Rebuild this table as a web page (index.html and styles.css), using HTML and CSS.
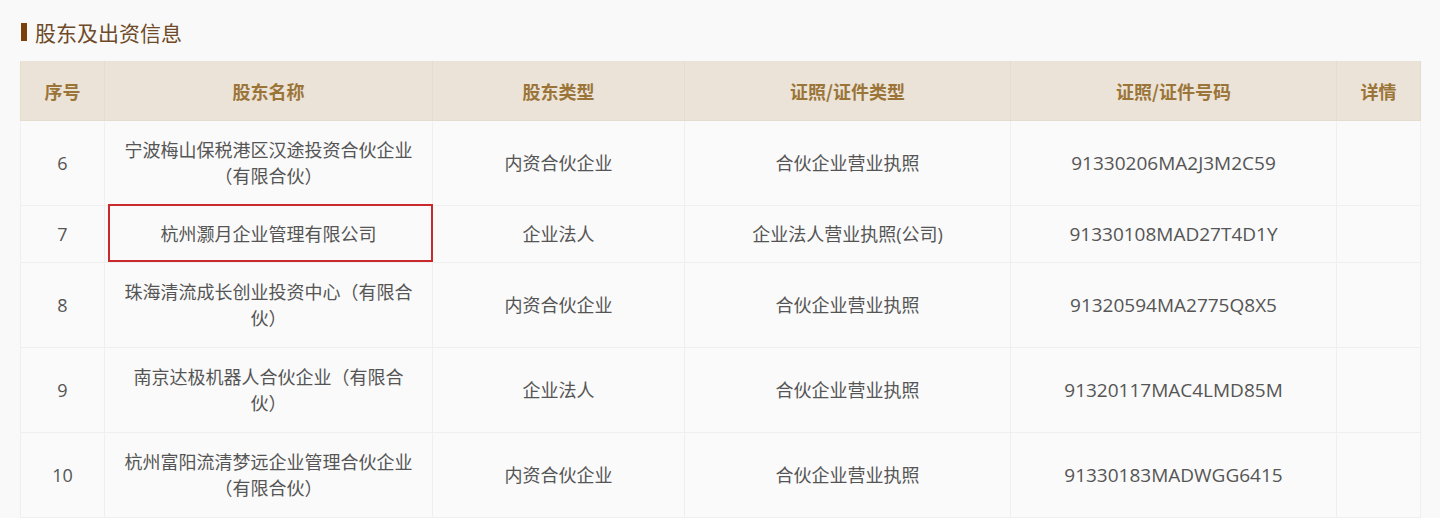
FILE: index.html
```html
<!DOCTYPE html>
<html lang="zh-CN">
<head>
<meta charset="utf-8">
<title>股东及出资信息</title>
<link rel="stylesheet" href="styles.css">
</head>
<body>
<section class="panel">
  <h2 class="title"><span class="title-mark"></span>股东及出资信息</h2>
  <table class="holders">
    <colgroup>
      <col class="c-no"><col class="c-name"><col class="c-type"><col class="c-lic"><col class="c-code"><col class="c-detail">
    </colgroup>
    <thead>
      <tr><th>序号</th><th>股东名称</th><th>股东类型</th><th>证照/证件类型</th><th>证照/证件号码</th><th>详情</th></tr>
    </thead>
    <tbody>
      <tr><td>6</td><td>宁波梅山保税港区汉途投资合伙企业<br>（有限合伙）</td><td>内资合伙企业</td><td>合伙企业营业执照</td><td class="code">91330206MA2J3M2C59</td><td></td></tr>
      <tr class="single"><td>7</td><td class="marked">杭州灏月企业管理有限公司<span class="mark-box"></span></td><td>企业法人</td><td>企业法人营业执照(公司)</td><td class="code">91330108MAD27T4D1Y</td><td></td></tr>
      <tr><td>8</td><td>珠海清流成长创业投资中心（有限合<br>伙）</td><td>内资合伙企业</td><td>合伙企业营业执照</td><td class="code">91320594MA2775Q8X5</td><td></td></tr>
      <tr><td>9</td><td>南京达极机器人合伙企业（有限合<br>伙）</td><td>企业法人</td><td>合伙企业营业执照</td><td class="code">91320117MAC4LMD85M</td><td></td></tr>
      <tr><td>10</td><td>杭州富阳流清梦远企业管理合伙企业<br>（有限合伙）</td><td>内资合伙企业</td><td>合伙企业营业执照</td><td class="code">91330183MADWGG6415</td><td></td></tr>
    </tbody>
  </table>
</section>
</body>
</html>
```

FILE: styles.css
```css
html, body {
  margin: 0;
  padding: 0;
  background: #f9f9f9;
}
body {
  font-family: "Open Sans", "Noto Sans CJK SC", sans-serif;
  color: #555555;
}
.panel {
  padding: 19px 20px 0 20px;
}
.title {
  display: flex;
  align-items: center;
  gap: 8px;
  margin: 0;
  height: 26px;
  font-family: "Noto Sans CJK SC", sans-serif;
  font-size: 21px;
  font-weight: normal;
  color: #6e4a28;
  line-height: 26px;
}
.title-mark {
  display: inline-block;
  width: 6px;
  height: 18px;
  background: #7b3f0c;
  margin-left: 1px;
}
.holders {
  margin-top: 16px;
  width: 1400px;
  border-collapse: collapse;
  table-layout: fixed;
}
.c-no { width: 84px; }
.c-name { width: 328px; }
.c-type { width: 252px; }
.c-lic { width: 326px; }
.c-code { width: 326px; }
.c-detail { width: 84px; }
.holders th {
  height: 59px;
  background: #ebe3d8;
  color: #9b7538;
  font-family: "Noto Sans CJK SC", sans-serif;
  font-size: 18px;
  font-weight: bold;
  border: 1px solid #e4dccf;
  border-top: none;
  padding: 0;
  text-align: center;
}
.holders td {
  text-align: center;
  font-size: 18px;
  line-height: 26px;
  padding: 16px 6px;
  border: 1px solid #efefef;
  color: #555555;
  background: #fafafa;
}
.holders td.code {
  font-size: 19px;
}
.holders tr.single td {
  padding: 15px 6px;
}
.holders td.marked {
  position: relative;
}
.mark-box {
  position: absolute;
  left: 3px;
  top: -2px;
  right: -1px;
  bottom: 0px;
  border: 2.5px solid #c9282d;
  box-sizing: border-box;
  pointer-events: none;
}
```
